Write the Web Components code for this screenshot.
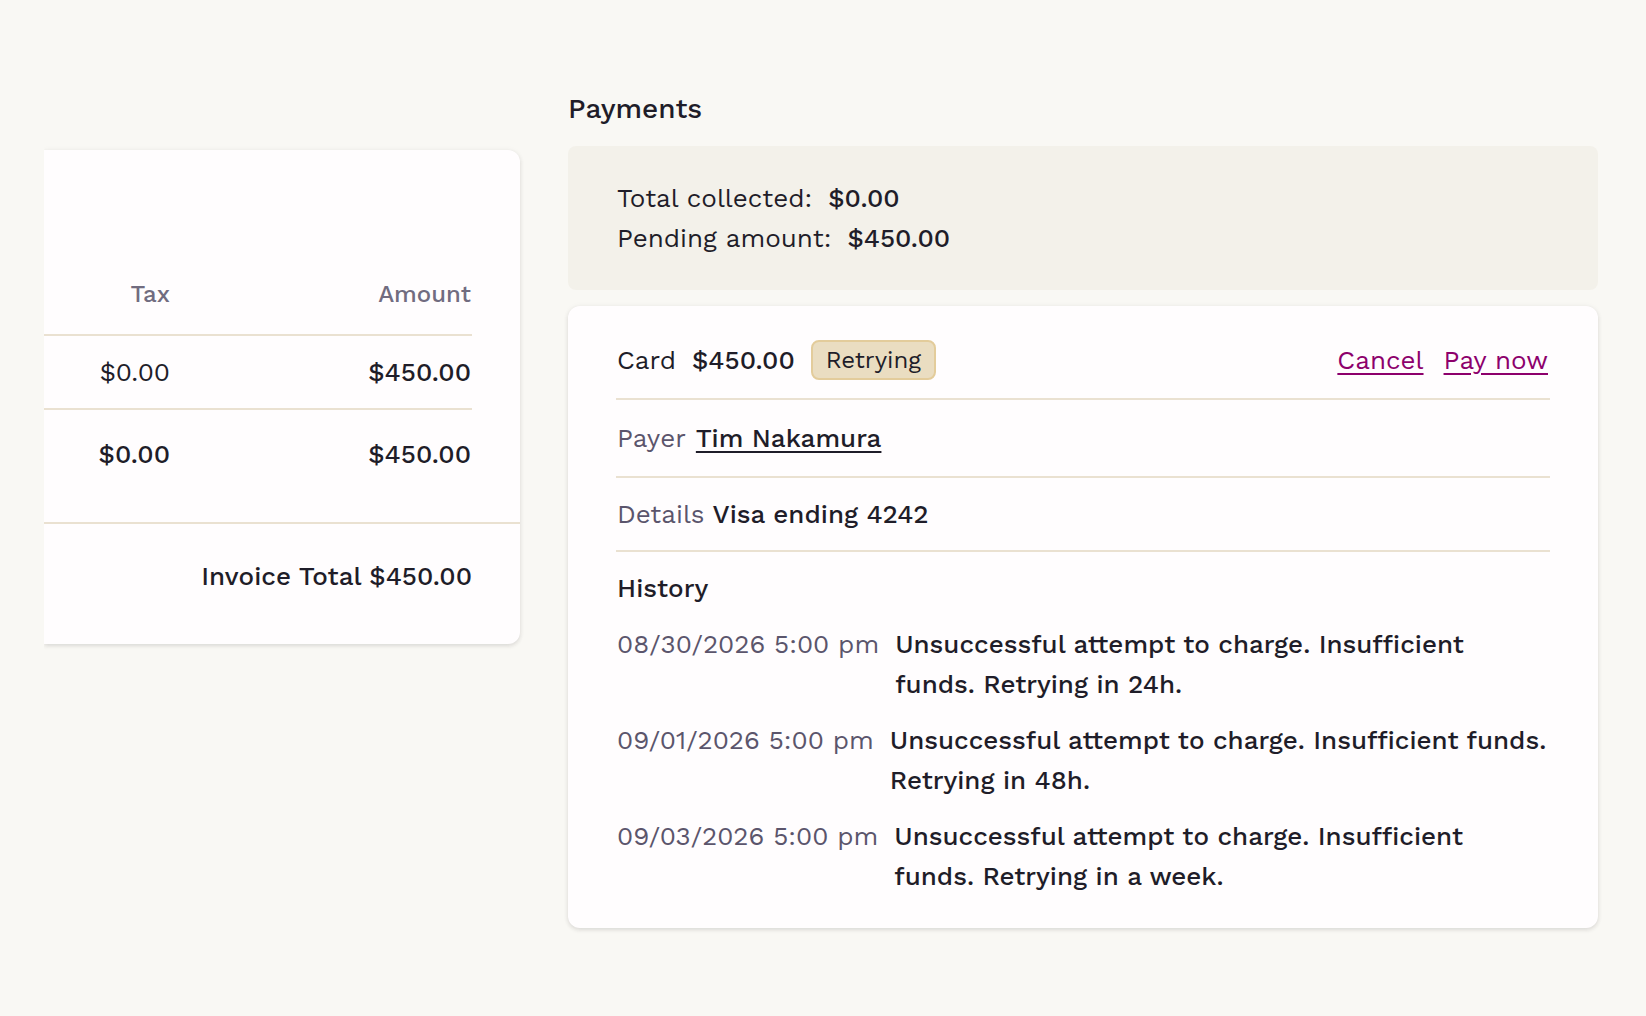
<!DOCTYPE html>
<html lang="en">
<head>
<meta charset="utf-8">
<title>Invoice payments</title>
<style>
  :root {
    --ink: #1f1d29;
    --muted: #5b556c;
    --muted-light: #716c80;
    --line: #eae1d1;
    --card: #fffdfe;
    --link: #8d006c;
    --shadow: 0 2px 4px rgba(40, 36, 30, 0.12), 0 0 6px rgba(40, 36, 30, 0.04);
  }
  body {
    margin: 0;
    background: #f9f8f4;
    color: var(--ink);
    font: 400 26px/40px "Work Sans", Inter, "Liberation Sans", sans-serif;
  }
</style>
</head>
<body>

<invoice-page>
  <invoice-summary slot="summary"></invoice-summary>
  <payments-panel slot="payments">
    <payment-totals>
      <total-line label="Total collected:">$0.00</total-line>
      <total-line label="Pending amount:">$450.00</total-line>
    </payment-totals>
    <payment-card method="Card" amount="$450.00">
      <status-badge slot="status">Retrying</status-badge>
      <text-link slot="actions" href="#cancel">Cancel</text-link>
      <text-link slot="actions" href="#pay">Pay now</text-link>
      <text-link slot="payer" class="payer" href="#payer">Tim Nakamura</text-link>
      <span slot="details">Visa ending 4242</span>
      <history-entry date="08/30/2026 5:00 pm">Unsuccessful attempt to charge. Insufficient funds. Retrying in 24h.</history-entry>
      <history-entry date="09/01/2026 5:00 pm">Unsuccessful attempt to charge. Insufficient funds. Retrying in 48h.</history-entry>
      <history-entry date="09/03/2026 5:00 pm">Unsuccessful attempt to charge. Insufficient funds. Retrying in a week.</history-entry>
    </payment-card>
  </payments-panel>
</invoice-page>

<script>
const define = (name, render) => {
  customElements.define(name, class extends HTMLElement {
    constructor() {
      super();
      this.attachShadow({ mode: 'open' });
    }

    connectedCallback() {
      this.shadowRoot.innerHTML = render(this);
    }
  });
};

define('invoice-page', () => `
  <style>
    :host {
      display: grid;
      grid-template-columns: 238fr 515fr;
      align-items: start;
      gap: 48px;
      padding: 88px 48px 88px 44px;
    }
    slot { display: block; min-width: 0; }
    slot[name="summary"] { padding-top: 62px; }
  </style>
  <slot name="summary"></slot>
  <slot name="payments"></slot>`);

define('invoice-summary', () => `
  <style>
    :host {
      display: block;
      background: var(--card);
      border-radius: 0 12px 12px 0;
      box-shadow: var(--shadow);
      /* the sheet continues to the left, so no shadow on that edge */
      clip-path: inset(-12px -12px -12px 0);
    }
    .lines { padding: 124px 48px 28px 0; }
    table { width: 100%; border-collapse: separate; border-spacing: 0; table-layout: fixed; }
    .tax { width: 127px; }
    th, td { padding: 16px 1px; text-align: right; font-weight: 400; }
    th { padding: 0 1px 20px; color: var(--muted-light); font-size: 24px; font-weight: 500; }
    thead th, tbody td { border-bottom: 2px solid var(--line); }
    tfoot td { padding: 24px 1px 20px; }
    .strong, tfoot td { font-weight: 500; }
    footer {
      padding: 32px 48px 48px 0;
      border-top: 2px solid var(--line);
      text-align: right;
      font-weight: 500;
    }
  </style>
  <div class="lines">
    <table>
      <colgroup><col class="tax"><col></colgroup>
      <thead><tr><th scope="col">Tax</th><th scope="col">Amount</th></tr></thead>
      <tbody><tr><td>$0.00</td><td class="strong">$450.00</td></tr></tbody>
      <tfoot><tr><td>$0.00</td><td>$450.00</td></tr></tfoot>
    </table>
  </div>
  <footer>Invoice Total $450.00</footer>`);

define('payments-panel', () => `
  <style>
    :host { display: block; }
    h2 { margin: 0 0 16px; font-size: 28px; font-weight: 500; line-height: 42px; }
    .stack { display: grid; gap: 16px; }
  </style>
  <h2>Payments</h2>
  <div class="stack"><slot></slot></div>`);

define('payment-totals', () => `
  <style>
    :host { display: block; padding: 32px 48px; background: #f3f1ea; border-radius: 8px; }
  </style>
  <slot></slot>`);

define('total-line', el => `
  <style>
    :host { display: flex; gap: 16px; padding: 0 1px; }
    strong { font-weight: 500; }
  </style>
  <span>${el.getAttribute('label')}</span>
  <strong><slot></slot></strong>`);

define('status-badge', () => `
  <style>
    :host {
      display: block;
      padding: 0 13px;
      border: 2px solid #e3cc9b;
      border-radius: 8px;
      background: #eaddc1;
      font-size: 24px;
      line-height: 36px;
    }
  </style>
  <slot></slot>`);

define('text-link', el => `
  <style>
    :host { padding: 0 2px; color: var(--link); }
    :host(.payer) { color: var(--ink); font-weight: 500; }
    a {
      color: inherit;
      text-decoration: underline 2px;
      text-underline-offset: 4px;
    }
  </style>
  <a href="${el.getAttribute('href')}"><slot></slot></a>`);

define('history-entry', el => `
  <style>
    :host { display: flex; gap: 16px; margin-top: 16px; padding: 0 1px; }
    time { flex: none; color: var(--muted); }
    p { margin: 0; font-weight: 500; }
  </style>
  <time>${el.getAttribute('date')}</time>
  <p><slot></slot></p>`);

define('payment-card', el => `
  <style>
    :host {
      display: block;
      padding: 16px 48px 32px;
      background: var(--card);
      border-radius: 12px;
      box-shadow: var(--shadow);
    }
    .row { display: flex; gap: 8px; padding: 16px 0 16px 1px; border-bottom: 2px solid var(--line); }
    .head, .payer { padding-block: 18px; }
    .head { gap: 16px; }
    .actions { display: flex; gap: 16px; margin-left: auto; }
    .label { color: var(--muted); }
    .strong, h3 { font-weight: 500; }
    h3 { margin: 16px 0 0; padding: 0 1px; font-size: 26px; }
  </style>
  <div class="row head">
    <span>${el.getAttribute('method')}</span>
    <span class="strong">${el.getAttribute('amount')}</span>
    <slot name="status"></slot>
    <div class="actions"><slot name="actions"></slot></div>
  </div>
  <div class="row payer"><span class="label">Payer</span><slot name="payer"></slot></div>
  <div class="row"><span class="label">Details</span><span class="strong"><slot name="details"></slot></span></div>
  <h3>History</h3>
  <slot></slot>`);
</script>
</body>
</html>
